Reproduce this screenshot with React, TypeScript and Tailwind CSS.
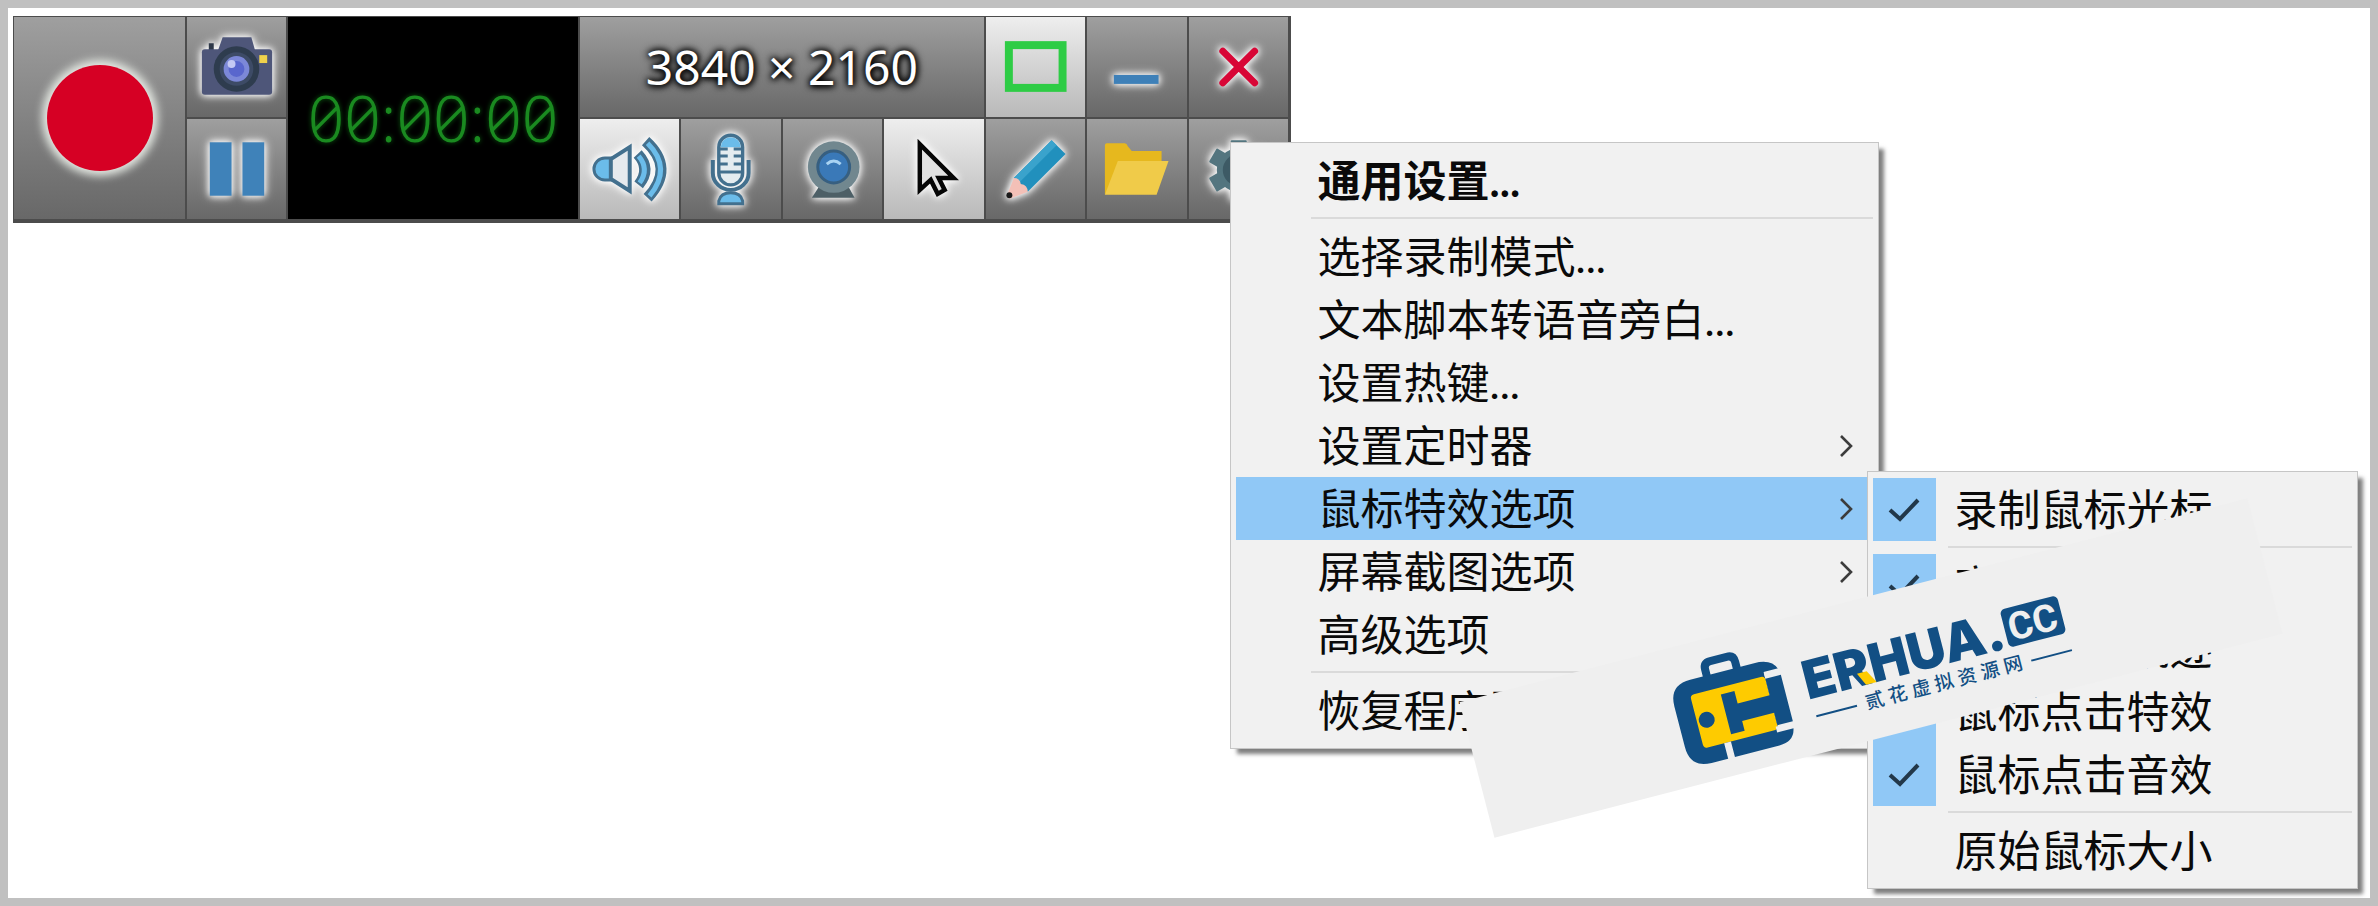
import type { ReactNode } from "react";
import { clsx } from "clsx";

type MenuEntry = {
  label: string;
  bold?: boolean;
  checked?: boolean;
  active?: boolean;
  children?: Entry[];
  arrow?: boolean;
};

type Entry = MenuEntry | "separator";

const mouseMenu: Entry[] = [
  { label: "录制鼠标光标", checked: true },
  "separator",
  { label: "高亮鼠标光标", checked: true },
  { label: "鼠标移动轨迹" },
  { label: "鼠标点击特效", checked: true },
  { label: "鼠标点击音效", checked: true },
  "separator",
  { label: "原始鼠标大小" },
];

const settingsMenu: Entry[] = [
  { label: "通用设置...", bold: true },
  "separator",
  { label: "选择录制模式..." },
  { label: "文本脚本转语音旁白..." },
  { label: "设置热键..." },
  { label: "设置定时器", arrow: true },
  { label: "鼠标特效选项", arrow: true, active: true, children: mouseMenu },
  { label: "屏幕截图选项", arrow: true },
  { label: "高级选项" },
  "separator",
  { label: "恢复程序默认设置" },
];

function Menu({ entries, className }: { entries: Entry[]; className: string }) {
  return (
    <ul
      className={clsx(
        "absolute border border-[#c6c6c6] bg-[#f1f1f1] px-[5px] py-[6px] shadow-[6px_6px_4px_-1px_rgba(0,0,0,0.5)]",
        className
      )}
    >
      {entries.map((entry, i) =>
        entry === "separator" ? (
          <li key={i} className="ml-[75px] h-[13px] pt-[5px]">
            <div className="h-[2px] bg-[#dadada]" />
          </li>
        ) : (
          <li key={i} className="relative">
            <button
              type="button"
              className={clsx(
                "flex h-[63px] w-full items-center text-left text-[43px] leading-none whitespace-nowrap text-[#0a0a0a]",
                entry.bold && "font-bold",
                entry.active && "bg-[#90c8f6]"
              )}
            >
              <span
                className={clsx(
                  "mr-[19px] flex h-full w-[63px] items-center justify-center",
                  entry.checked && "bg-[#90c8f6]"
                )}
              >
                {entry.checked && (
                  <svg width="32" height="24" viewBox="0 0 32 24" fill="none">
                    <path d="M2 12 L12 21 L30 2" stroke="#22384a" strokeWidth="4" />
                  </svg>
                )}
              </span>
              {entry.label}
              {entry.arrow && (
                <svg className="mr-5 ml-auto" width="14" height="24" viewBox="0 0 14 24" fill="none">
                  <path d="M2 2 L12 12 L2 22" stroke="#3c3c3c" strokeWidth="2.6" />
                </svg>
              )}
            </button>
            {entry.children && <Menu entries={entry.children} className="top-[-6px] left-[calc(100%-6px)] w-[491px]" />}
          </li>
        )
      )}
    </ul>
  );
}

function ToolButton({ label, pressed, children }: { label: string; pressed?: boolean; children: ReactNode }) {
  return (
    <button
      type="button"
      aria-label={label}
      className={clsx(
        "flex h-full w-full items-center justify-center bg-linear-to-b",
        pressed ? "from-[#eeeeee] to-[#b9b9b9]" : "from-[#9f9f9f] to-[#686868]"
      )}
    >
      {children}
    </button>
  );
}

function Icon({ children, glow = true }: { children: ReactNode; glow?: boolean }) {
  return (
    <svg
      viewBox="0 0 100 100"
      fill="none"
      className={clsx(
        "h-[100px] w-full",
        glow && "[filter:drop-shadow(0_0_3px_white)_drop-shadow(0_0_4px_rgba(255,255,255,0.8))]"
      )}
    >
      {children}
    </svg>
  );
}

function Recorder() {
  return (
    <div className="grid w-[1278px] grid-cols-[171px_99px_290px_repeat(7,1fr)] grid-rows-[100px_100px] gap-[2px] border border-r-[3px] border-b-[4px] border-[#4c4c4c] bg-[#4c4c4c]">
      <div className="row-span-2">
        <ToolButton label="录制">
          <span className="h-[106px] w-[106px] rounded-full bg-[#d60024] shadow-[0_0_8px_5px_#e4e8e2]" />
        </ToolButton>
      </div>
      <ToolButton label="截图">
        <Icon>
          <rect x="22" y="26" width="5" height="8" fill="#2e3848" />
          <path d="M31 34 L36 20 H65 L69 34Z" fill="#4e5679" />
          <rect x="15" y="32" width="71" height="46" rx="3" fill="#4e5679" />
          <rect x="73" y="38" width="8" height="8" fill="#f0d24c" />
          <circle cx="50" cy="52" r="23" fill="#2e3c4e" />
          <circle cx="50" cy="52" r="17" fill="#3d4b66" />
          <circle cx="50" cy="52" r="13" fill="#7c88d8" />
          <circle cx="50" cy="52" r="8" fill="#5966cd" />
          <circle cx="45" cy="47" r="4" fill="#c4c9f4" />
        </Icon>
      </ToolButton>
      <div className="row-span-2 flex items-center justify-center bg-black font-['Noto_Sans',sans-serif] text-[64px] leading-none font-light text-[#1a8a20] slashed-zero [text-shadow:0_0_5px_#0b5a10]">
        00:00:00
      </div>
      <div className="col-span-4 flex items-center justify-center bg-linear-to-b from-[#9f9f9f] to-[#686868] font-['Noto_Sans',sans-serif] text-[48px] leading-none text-white [text-shadow:0_0_6px_black,1px_1px_6px_black,0_0_10px_black]">
        3840 × 2160
      </div>
      <ToolButton label="显示边框" pressed>
        <Icon glow={false}>
          <rect x="23" y="28" width="54" height="43" stroke="#2ecc45" strokeWidth="8" />
        </Icon>
      </ToolButton>
      <ToolButton label="最小化">
        <Icon>
          <rect x="27" y="58" width="45" height="9" fill="#3e80b8" />
        </Icon>
      </ToolButton>
      <ToolButton label="关闭">
        <Icon>
          <path d="M34 34 L66 66 M66 34 L34 66" stroke="#d80636" strokeWidth="7" strokeLinecap="round" />
        </Icon>
      </ToolButton>

      <ToolButton label="暂停">
        <Icon>
          <rect x="23" y="23" width="22" height="54" fill="#3f82b9" />
          <rect x="56" y="23" width="22" height="54" fill="#3f82b9" />
        </Icon>
      </ToolButton>
      <ToolButton label="系统声音" pressed>
        <Icon>
          <path d="M31 39 H25 A11 11 0 0 0 25 61 H31Z" fill="#6bbcea" stroke="#43708e" strokeWidth="3" />
          <path d="M31 40 L50 28 V72 L31 60Z" fill="#e6eaee" stroke="#43708e" strokeWidth="4" />
          <path d="M58 35 Q72 50 59 66" stroke="#43708e" strokeWidth="11" />
          <path d="M59 37 Q70 50 60 64" stroke="#6bbcea" strokeWidth="5" />
          <path d="M66 22 Q96 49 68 79" stroke="#43708e" strokeWidth="11" />
          <path d="M68 24 Q93 49 70 77" stroke="#6bbcea" strokeWidth="5" />
        </Icon>
      </ToolButton>
      <ToolButton label="麦克风">
        <Icon>
          <path d="M32 41 V54 A18 17 0 0 0 68 54 V41" stroke="#43708e" strokeWidth="4" />
          <rect x="38" y="16" width="24" height="50" rx="12" fill="#e4ecf0" stroke="#43708e" strokeWidth="3.4" />
          <path d="M40 28 A10 10 0 0 1 60 28Z" fill="#6bbcea" />
          <path
            d="M39 30 H47 M53 30 H61 M39 37 H47 M53 37 H61 M39 45 H47 M53 45 H61 M39 53 H61"
            stroke="#43708e"
            strokeWidth="3"
          />
          <path d="M38 85 V82 Q40 74 50 74 Q60 74 62 82 V85Z" fill="#6bbcea" stroke="#43708e" strokeWidth="3" />
        </Icon>
      </ToolButton>
      <ToolButton label="摄像头">
        <Icon>
          <path d="M36 68 H66 L72 79 H29Z" fill="#4d5f66" />
          <circle cx="51" cy="48" r="26" fill="#71878f" />
          <circle cx="51" cy="48" r="16" fill="#3a79b8" stroke="#375f80" strokeWidth="3" />
          <path d="M44 45 Q51 39 58 45" stroke="#a9d3f2" strokeWidth="3" />
        </Icon>
      </ToolButton>
      <ToolButton label="鼠标" pressed>
        <Icon>
          <path d="M36 25 V71 L47 61 L54 75 L61 71 L55 59 H70Z" fill="#e2e2e2" stroke="#060606" strokeWidth="4.5" />
        </Icon>
      </ToolButton>
      <ToolButton label="画笔">
        <Icon>
          <path d="M66 21 L80 35 L42 73 L28 59Z" fill="#2190bd" />
          <path d="M66 21 L71 26 L33 64 L28 59Z" fill="#3aa3cc" />
          <path d="M28 59 Q34 59 35 65 Q42 66 42 73 L24 80 L21 77Z" fill="#f3c0b7" />
          <circle cx="23.5" cy="76.5" r="3" fill="#1a1a1a" />
        </Icon>
      </ToolButton>
      <ToolButton label="打开文件夹">
        <Icon glow={false}>
          <path d="M18 26 Q18 24 20 24 H38 Q40 24 41 27 L45 32 H75 V44 L31 60 L18 76Z" fill="#e6b81e" />
          <path d="M31 42 H82 L70 76 H18Z" fill="#f0cb49" />
        </Icon>
      </ToolButton>
      <div className="relative">
        <ToolButton label="设置">
          <Icon>
            <g fill="#53757f">
              <circle cx="50" cy="51" r="22" />
              <rect x="42" y="21" width="16" height="60" rx="1" />
              <rect x="42" y="21" width="16" height="60" rx="1" transform="rotate(60 50 51)" />
              <rect x="42" y="21" width="16" height="60" rx="1" transform="rotate(-60 50 51)" />
            </g>
            <circle cx="50" cy="51" r="16" fill="#3d5a65" />
          </Icon>
        </ToolButton>
        <Menu entries={settingsMenu} className="top-[23px] left-[41px] w-[649px]" />
      </div>
    </div>
  );
}

function Brand() {
  return (
    <svg
      width="814"
      height="140"
      viewBox="-407 -70 814 140"
      className="pointer-events-none absolute top-[590px] left-[1456px] -rotate-[14.5deg] bg-[#efefef]"
    >
      {/* suitcase */}
      <path d="M-161 -32 V-40 Q-161 -47 -154 -47 H-137 Q-130 -47 -130 -40 V-32" fill="none" stroke="#124f84" strokeWidth="8" />
      <path d="M-178 -34 H-112 Q-94 -34 -90 -22 H-105 V38 H-90 Q-92 52 -108 52 H-178 Q-200 52 -200 30 V-12 Q-200 -34 -178 -34Z" fill="#124f84" />
      <rect x="-182" y="-19" width="77" height="55" rx="4" fill="#fecb00" />
      <path d="M-105 -23 H-88 V-17 H-105Z M-107 33 H-88 V39 H-107Z M-161 36 H-154 V54 H-161Z" fill="#efefef" />
      <path d="M-152 -12 H-138 V1 H-105 V-16 H-89 V32 H-105 V19 H-138 V29 H-152Z" fill="#124f84" />
      <circle cx="-172" cy="9" r="8" fill="#124f84" />
      <text x="-69" y="15" className="fill-[#124f84] font-['Inter',sans-serif] text-[53px] font-black">
        ERHUA.
      </text>
      <path d="M-15 2 H-5 L2 15 H-9Z" fill="#fecb00" />
      <rect x="139" y="-24" width="59" height="39" rx="5" fill="#124f84" />
      <text x="168" y="9" textAnchor="middle" className="fill-[#efefef] font-['Roboto',sans-serif] text-[38px] font-bold">
        CC
      </text>
      <path d="M-65 33 H-23 M157 33 H199" stroke="#124f84" strokeWidth="2" />
      <text x="67" y="39" textAnchor="middle" className="fill-[#124f84] text-[19px] font-medium">
        贰 花 虚 拟 资 源 网
      </text>
    </svg>
  );
}

export default function App() {
  return (
    <main className="relative min-h-screen overflow-hidden border-8 border-[#c0c0c0] bg-white pt-2 pl-[5px] font-['Lato','Noto_Sans_CJK_SC',sans-serif]">
      <Recorder />
      <Brand />
    </main>
  );
}
